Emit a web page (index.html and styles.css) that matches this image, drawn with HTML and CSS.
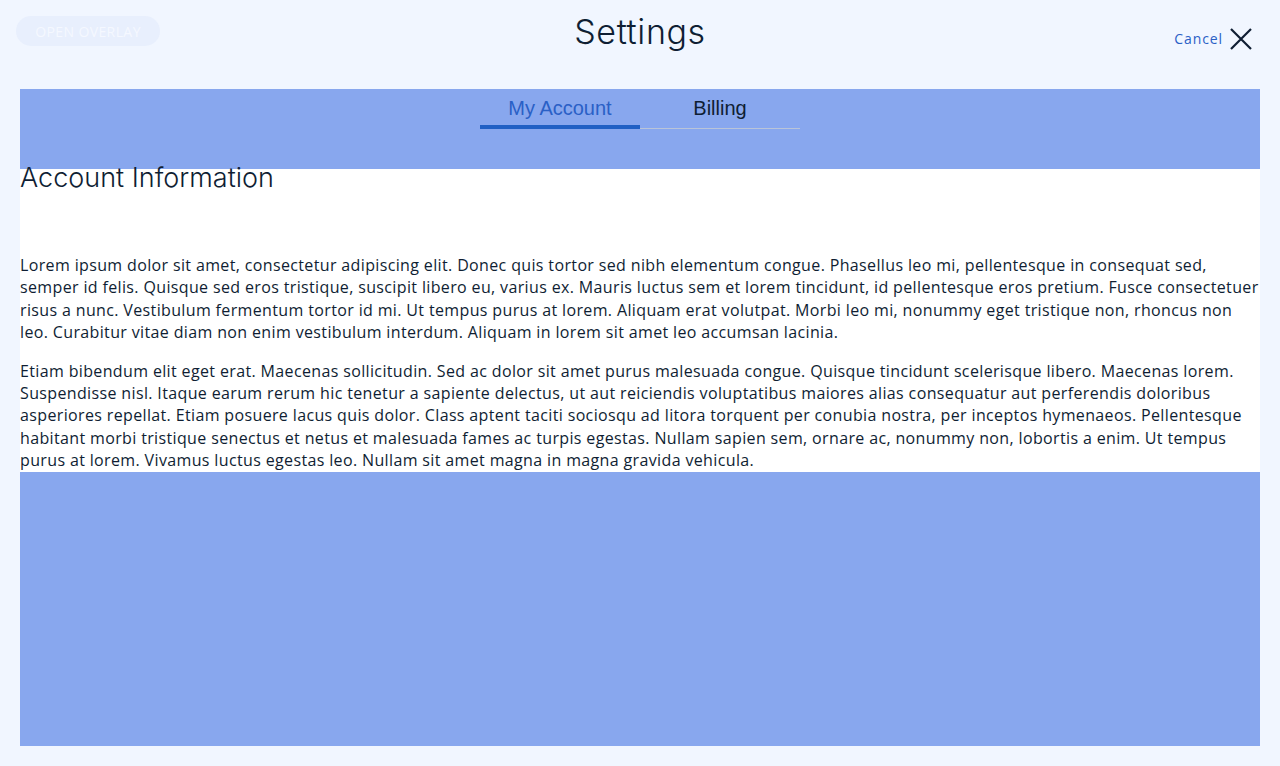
FILE: index.html
```html
<!DOCTYPE html>
<html>
<head>
<meta charset="utf-8">
<link rel="stylesheet" href="styles.css">
</head>
<body>
<header class="topbar">
  <button class="open-btn">Open Overlay</button>
  <h1 class="title">Settings</h1>
  <div class="cancel">
    <span class="cancel-text">Cancel</span>
    <svg class="close-icon" width="24" height="24" viewBox="0 0 24 24"><path d="M2 2 L22 22 M22 2 L2 22" stroke="#0f1e33" stroke-width="2.2" fill="none"/></svg>
  </div>
</header>
<main class="panel">
  <nav class="tabs">
    <div class="tab active">My Account</div>
    <div class="tab">Billing</div>
  </nav>
  <section class="content">
    <h2 class="section-title">Account Information</h2>
    <p>Lorem ipsum dolor sit amet, consectetur adipiscing elit. Donec quis tortor sed nibh elementum congue. Phasellus leo mi, pellentesque in consequat sed, semper id felis. Quisque sed eros tristique, suscipit libero eu, varius ex. Mauris luctus sem et lorem tincidunt, id pellentesque eros pretium. Fusce consectetuer risus a nunc. Vestibulum fermentum tortor id mi. Ut tempus purus at lorem. Aliquam erat volutpat. Morbi leo mi, nonummy eget tristique non, rhoncus non leo. Curabitur vitae diam non enim vestibulum interdum. Aliquam in lorem sit amet leo accumsan lacinia.</p>
    <p>Etiam bibendum elit eget erat. Maecenas sollicitudin. Sed ac dolor sit amet purus malesuada congue. Quisque tincidunt scelerisque libero. Maecenas lorem. Suspendisse nisl. Itaque earum rerum hic tenetur a sapiente delectus, ut aut reiciendis voluptatibus maiores alias consequatur aut perferendis doloribus asperiores repellat. Etiam posuere lacus quis dolor. Class aptent taciti sociosqu ad litora torquent per conubia nostra, per inceptos hymenaeos. Pellentesque habitant morbi tristique senectus et netus et malesuada fames ac turpis egestas. Nullam sapien sem, ornare ac, nonummy non, lobortis a enim. Ut tempus purus at lorem. Vivamus luctus egestas leo. Nullam sit amet magna in magna gravida vehicula.</p>
  </section>
  <div class="filler"></div>
</main>
</body>
</html>
```

FILE: styles.css
```css
html, body {
  margin: 0;
  padding: 0;
  height: 100%;
}
body {
  background: #f1f6ff;
  font-family: "Open Sans", sans-serif;
  color: #0f1e33;
  display: flex;
  flex-direction: column;
  padding: 0 20px 20px;
  box-sizing: border-box;
}
.topbar {
  position: relative;
  height: 89px;
  display: flex;
  justify-content: center;
}
.open-btn {
  position: absolute;
  left: -4px;
  top: 16px;
  width: 144px;
  height: 30px;
  border: none;
  border-radius: 15px;
  background: #e8effd;
  color: #f5f8ff;
  font-family: "Open Sans", sans-serif;
  font-size: 14px;
  font-weight: 500;
  text-transform: uppercase;
  letter-spacing: 0.4px;
  padding: 0;
}
.title {
  margin: 12px 0 0;
  font-family: Inter, sans-serif;
  font-weight: 300;
  font-size: 34px;
  line-height: 40px;
  color: #0f1e33;
  letter-spacing: 0.6px;
}
.cancel {
  position: absolute;
  right: 7px;
  top: 27px;
  display: flex;
  align-items: center;
  gap: 6px;
}
.cancel-text {
  color: #2a60c6;
  font-size: 14px;
  letter-spacing: 0.9px;
  margin-top: -1px;
}
.close-icon {
  display: block;
}
.panel {
  flex: 1;
  background: #88a7ee;
  display: flex;
  flex-direction: column;
}
.tabs {
  height: 80px;
  display: flex;
  justify-content: center;
  align-items: flex-start;
}
.tab {
  width: 160px;
  height: 39px;
  text-align: center;
  font-family: "Liberation Sans", Arial, sans-serif;
  font-size: 20px;
  line-height: 38px;
  color: #0f1e33;
  border-bottom: 1px solid #b9c4d8;
}
.tab.active {
  color: #2a60c6;
  height: 36px;
  line-height: 38px;
  border-bottom: 4px solid #2160c4;
}
.content {
  background: #ffffff;
}
.section-title {
  margin: -8px 0 59px;
  font-family: Inter, sans-serif;
  font-weight: 300;
  font-size: 27px;
  line-height: 34px;
  color: #0f1e33;
  letter-spacing: 0;
}
.content p {
  margin: 0 0 16px;
  font-size: 16px;
  line-height: 22.4px;
  letter-spacing: 0.36px;
  color: #0f1e33;
}
.content p:last-child {
  margin-bottom: 0;
}
.filler {
  flex: 1;
}
```
